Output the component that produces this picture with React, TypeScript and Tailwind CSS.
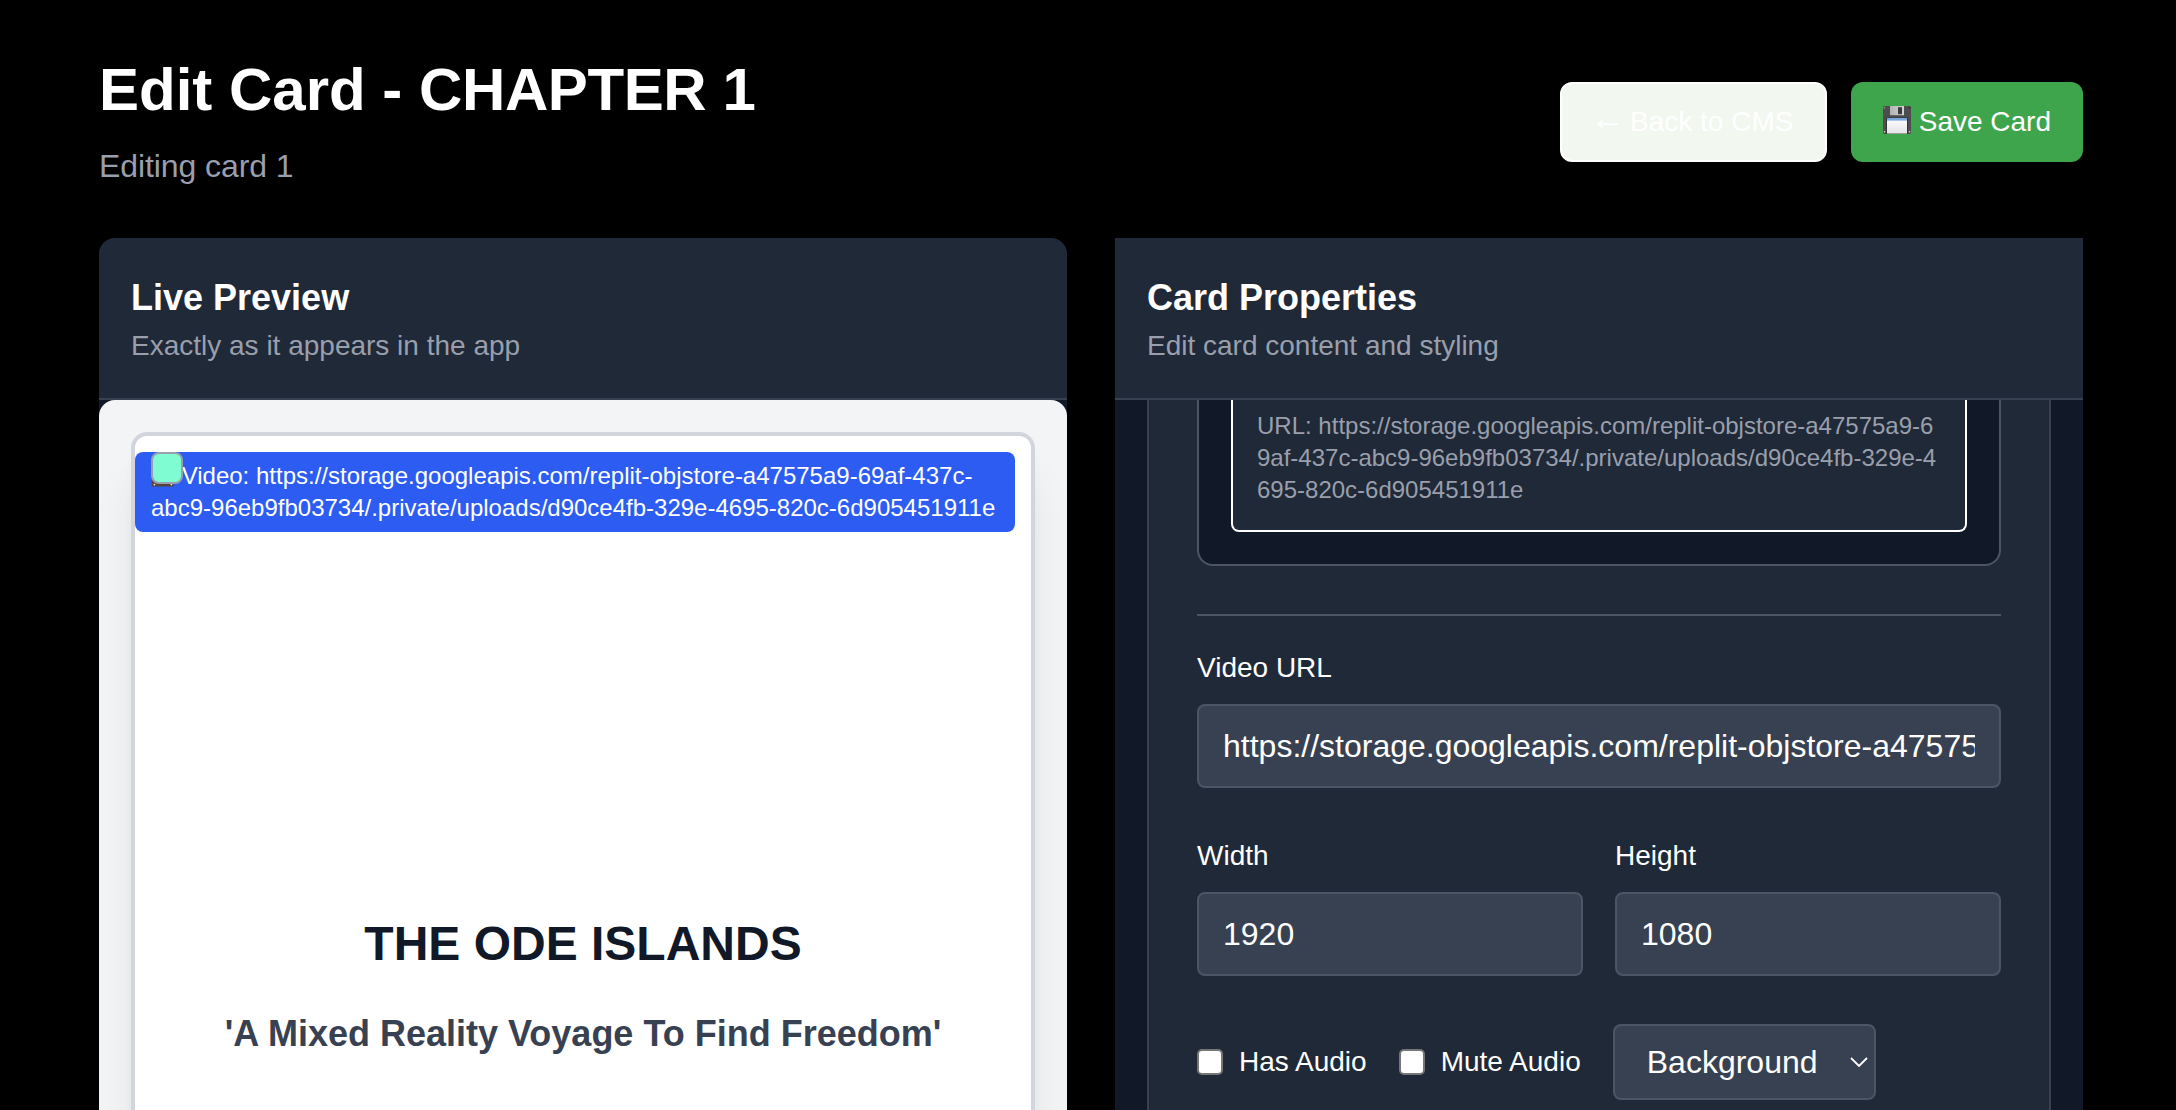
import type { ReactNode } from 'react';

const VIDEO_URL =
  'https://storage.googleapis.com/replit-objstore-a47575a9-69af-437c-abc9-96eb9fb03734/.private/uploads/d90ce4fb-329e-4695-820c-6d905451911e';

function FloppyIcon() {
  return (
    <svg viewBox="0 0 28 28" className="-mt-1 h-7 w-7 shrink-0" aria-hidden="true">
      <defs>
        <linearGradient id="shutter" x1="0" x2="1">
          <stop offset="0" stopColor="#b2b2b2" />
          <stop offset="1" stopColor="#d4d4d4" />
        </linearGradient>
        <linearGradient id="label" x1="0" x2="0" y1="0" y2="1">
          <stop offset="0" stopColor="#ffffff" />
          <stop offset="1" stopColor="#e4e4e8" />
        </linearGradient>
      </defs>
      <path d="M1 0h26l1 1v26l-1 1H1l-1-1V1z" fill="#4d4d4f" />
      <rect x="0.6" y="1" width="1.6" height="1.6" fill="#8b8b8b" />
      <rect x="25.8" y="1" width="1.6" height="1.6" fill="#2c2c2c" />
      <rect x="7" y="0" width="14" height="9.2" fill="url(#shutter)" />
      <rect x="15" y="1.2" width="4" height="7" fill="#3b3b3d" />
      <rect x="3" y="11.6" width="22" height="16.4" rx="0.6" fill="#333335" />
      <rect x="4" y="12" width="20" height="15.6" fill="url(#label)" />
      <rect x="4" y="12" width="20" height="2.6" fill="#79a6dc" />
      <rect x="0.8" y="25" width="1.4" height="1.4" fill="#d0d0d0" />
      <rect x="25.8" y="25" width="1.4" height="1.4" fill="#d0d0d0" />
    </svg>
  );
}

function TvIcon() {
  return (
    <svg viewBox="0 0 24 24" className="inline-block h-6 w-6 align-[-3px]" aria-hidden="true">
      <rect x="0.7" y="4" width="22" height="19.4" rx="1" fill="#55443b" />
      <circle cx="3.4" cy="21.6" r="0.9" fill="#efe8e0" />
      <circle cx="20.4" cy="21.6" r="0.9" fill="#efe8e0" />
    </svg>
  );
}

function PanelHeader({ title, subtitle }: { title: string; subtitle: string }) {
  return (
    <div className="h-[162px] shrink-0 border-b-2 border-[#384151] bg-[#202937] p-8">
      <h2 className="text-4xl leading-[56px] font-bold text-white">{title}</h2>
      <p className="text-[28px] leading-10 text-[#999fac]">{subtitle}</p>
    </div>
  );
}

function Field({ label, value }: { label: string; value: string }) {
  return (
    <label className="block min-w-0">
      <span className="block text-[28px] leading-10 text-white">{label}</span>
      <input
        readOnly
        value={value}
        className="mt-4 block h-[84px] w-full rounded-lg border-2 border-[#4b5564] bg-[#384151] px-6 text-[32px] leading-[48px] text-white outline-none"
      />
    </label>
  );
}

function Check({ children }: { children: ReactNode }) {
  return (
    <label className="flex items-center gap-4">
      <input
        type="checkbox"
        className="size-[26px] appearance-none rounded-[5px] border-2 border-[#767676] bg-white"
      />
      <span className="text-[28px] leading-10 whitespace-nowrap text-white">{children}</span>
    </label>
  );
}

function PreviewPanel() {
  return (
    <section className="flex w-[968px] flex-col overflow-hidden rounded-t-2xl bg-[#111827]">
      <PanelHeader title="Live Preview" subtitle="Exactly as it appears in the app" />
      <div className="flex flex-1 overflow-hidden rounded-t-2xl bg-[#f3f4f6] px-8 pt-8">
        <div className="h-[1400px] w-full shrink-0 overflow-hidden rounded-2xl border-4 border-[#d2d5dd] bg-white pt-4 shadow-[0_40px_50px_-10px_rgba(0,0,0,0.1),0_16px_20px_-12px_rgba(0,0,0,0.1)]">
          <div className="relative h-20 w-[880px] rounded-lg bg-[#2c5cf2] px-4 py-2 text-2xl leading-8 text-white">
            <TvIcon /> Video: {VIDEO_URL}
            <div className="absolute top-0 left-4 size-8 rounded-lg border-2 border-[#999fac] bg-[#80fcd2]" />
          </div>
          <div className="mt-[382px] text-center font-bold">
            <h1 className="text-5xl leading-[60px] text-[#111827]">THE ODE ISLANDS</h1>
            <h2 className="mt-8 text-4xl leading-[56px] text-[#384151]">
              'A Mixed Reality Voyage To Find Freedom'
            </h2>
          </div>
        </div>
      </div>
    </section>
  );
}

function PropertiesPanel() {
  return (
    <section className="flex w-[968px] flex-col overflow-hidden bg-[#111827]">
      <PanelHeader title="Card Properties" subtitle="Edit card content and styling" />
      <div className="flex-1 overflow-hidden px-8">
        <div className="h-[1200px] border-x-2 border-[#384151] bg-[#202937] px-12">
          <div className="rounded-b-2xl border-2 border-t-0 border-[#4b5564] bg-[#111827] px-8 pb-8">
            <div className="rounded-b-lg border-2 border-t-0 border-white bg-[#202937] px-6 pt-2.5 pb-6 text-2xl leading-8 break-all text-[#999fac]">
              URL: {VIDEO_URL}
            </div>
          </div>
          <div className="mt-12 flex flex-col gap-12 border-t-2 border-[#4b5564] pt-8">
            <Field label="Video URL" value={VIDEO_URL} />
            <div className="grid grid-cols-2 gap-8">
              <Field label="Width" value="1920" />
              <Field label="Height" value="1080" />
            </div>
            <div className="flex items-center gap-8">
              <Check>Has Audio</Check>
              <Check>Mute Audio</Check>
              <button className="flex h-[76px] w-[263px] items-center justify-between rounded-lg border-2 border-[#4b5564] bg-[#384151] pr-[6px] pl-8 text-[32px] leading-[48px] text-white">
                Background
                <svg viewBox="0 0 18 10" className="h-2.5 w-[18px]" fill="none" stroke="white" strokeWidth="1.8">
                  <path d="M1 1 9 9 17 1" />
                </svg>
              </button>
            </div>
          </div>
        </div>
      </div>
    </section>
  );
}

export default function App() {
  return (
    <div className="flex h-[1110px] w-[2176px] flex-col overflow-hidden bg-black pr-[93px] pl-[99px] font-['Liberation_Sans',Arial,sans-serif]">
      <header className="flex h-[238px] shrink-0 items-center justify-between pt-[6px]">
        <div>
          <h1 className="text-6xl leading-[72px] font-bold text-white">
            Edit Card - <span className="tracking-[-0.4px]">CHAPTER 1</span>
          </h1>
          <p className="mt-4 text-[32px] leading-[48px] tracking-[-0.08px] text-[#999fac]">Editing card 1</p>
        </div>
        <div className="flex gap-6 text-[28px] leading-10">
          <button className="flex h-20 w-[267px] items-center gap-2 rounded-xl border-2 border-white bg-[#f2f7f0] pl-8 whitespace-nowrap text-white">
            <span className="-mt-2 flex w-7 justify-center text-4xl leading-10">←</span>
            Back to CMS
          </button>
          <button className="flex h-20 w-[232px] items-center justify-end gap-2 rounded-xl bg-[#3fa54c] pr-8 whitespace-nowrap text-white">
            <FloppyIcon />
            Save Card
          </button>
        </div>
      </header>
      <main className="flex min-h-0 flex-1 gap-12">
        <PreviewPanel />
        <PropertiesPanel />
      </main>
    </div>
  );
}
